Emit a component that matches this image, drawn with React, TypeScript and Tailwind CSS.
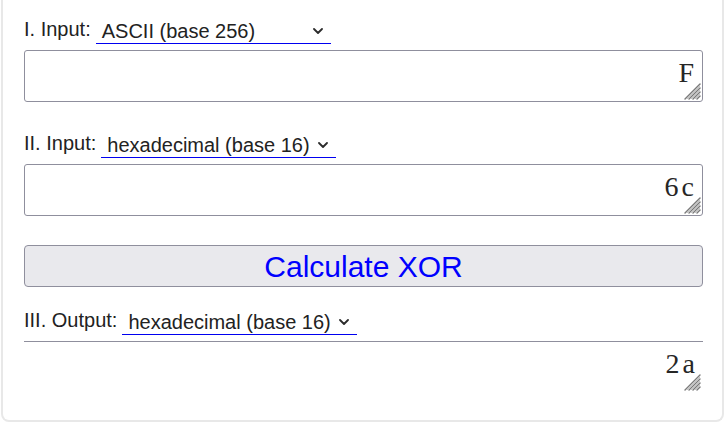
import React from "react";

function Chevron() {
  return (
    <svg width="10" height="6" viewBox="0 0 10 6" className="shrink-0">
      <path d="M1 1 L5 5 L9 1" fill="none" stroke="#2b2b2b" strokeWidth="1.8" strokeLinecap="round" strokeLinejoin="round" />
    </svg>
  );
}

function Grip() {
  return (
    <svg width="17" height="17" viewBox="0 0 17 17" className="pointer-events-none absolute bottom-[2px] right-[2px]">
      <g stroke="#7a7a7a" strokeWidth="1.4" strokeLinecap="round">
        <line x1="16" y1="1" x2="1" y2="16" />
        <line x1="16" y1="5" x2="5" y2="16" />
        <line x1="16" y1="9" x2="9" y2="16" />
        <line x1="16" y1="13" x2="13" y2="16" />
      </g>
      <g stroke="#c4c4c4" strokeWidth="1">
        <line x1="16" y1="3" x2="3" y2="16" />
        <line x1="16" y1="7" x2="7" y2="16" />
        <line x1="16" y1="11" x2="11" y2="16" />
      </g>
    </svg>
  );
}

function Select({ text }: { text: string }) {
  return (
    <div className="ml-[5px] flex h-[26px] w-[235px] items-center justify-between border-b-[1.5px] border-[#0000f0] pl-[6px] pr-[8px]">
      <span className="leading-none">{text}</span>
      <Chevron />
    </div>
  );
}

function Row({ label, value, className }: { label: string; value: string; className?: string }) {
  return (
    <div className={"flex items-end text-[20px] text-[#222] " + (className ?? "")}>
      <span className="pb-[5px] leading-none">{label}</span>
      <Select text={value} />
    </div>
  );
}

function Area({ value, bordered, className }: { value: string; bordered: boolean; className?: string }) {
  return (
    <div className={"relative " + (className ?? "")}>
      <textarea
        readOnly
        value={value}
        className={
          bordered
            ? "block h-[52px] w-full resize-none rounded-[3px] border border-[#8f8f9d] pl-[6px] pr-[5px] pt-[6px] text-right font-['Liberation_Serif','Times_New_Roman',serif] text-[28px] leading-[1.15] tracking-[3px] text-[#262626] outline-none"
            : "block h-[52px] w-full resize-none border-0 border-t border-[#8f8f9d] pl-[6px] pr-[5px] pt-[6px] text-right font-['Liberation_Serif','Times_New_Roman',serif] text-[28px] leading-[1.15] tracking-[3px] text-[#262626] outline-none"
        }
      />
      <Grip />
    </div>
  );
}

export default function App() {
  return (
    <div className="min-h-[423px] bg-white px-[1px] font-['Liberation_Sans',Arial,sans-serif]">
      <div className="rounded-b-[8px] border-2 border-t-0 border-[#e8e8e8] pb-[27px] pl-[21px] pr-[19px] pt-[18px]">
        <Row label="I. Input:" value="ASCII (base 256)" />
        <Area value="F" bordered className="mt-[6px]" />
        <Row label="II. Input:" value="hexadecimal (base 16)" className="mt-[30px]" />
        <Area value="6c" bordered className="mt-[6px]" />
        <button className="mt-[29px] flex h-[42px] w-full items-center justify-center rounded-[4px] border border-[#8f8f9d] bg-[#e9e9ed] text-[30px] text-[#0000ff]">
          Calculate XOR
        </button>
        <Row label="III. Output:" value="hexadecimal (base 16)" className="mt-[22px]" />
        <Area value="2a" bordered={false} className="mt-[6px]" />
      </div>
    </div>
  );
}
